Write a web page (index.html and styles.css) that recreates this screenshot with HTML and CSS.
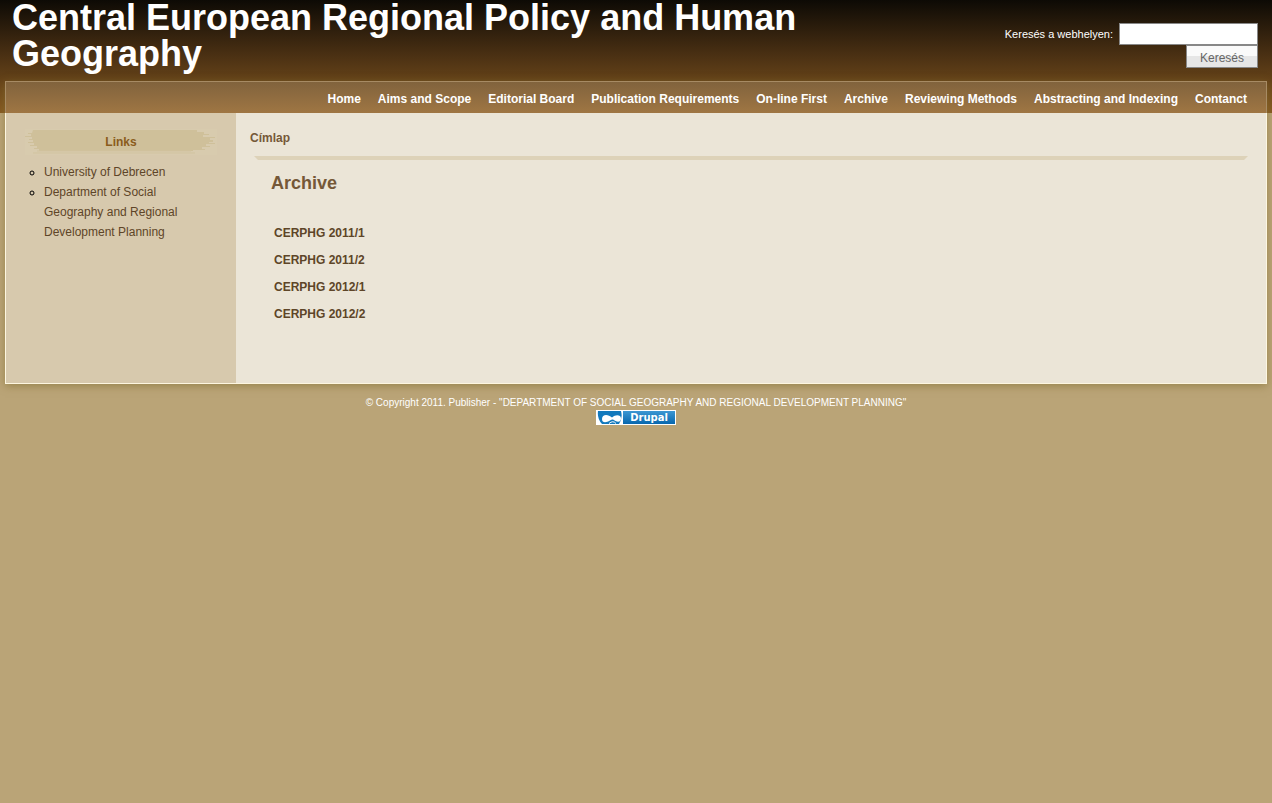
FILE: index.html
```html
<!DOCTYPE html>
<html lang="hu">
<head>
    <meta charset="UTF-8">
    <meta name="viewport" content="width=device-width, initial-scale=1.0">
    <title>Archive | Central European Regional Policy and Human Geography</title>
    <link rel="stylesheet" href="styles.css">
</head>
<body>
    <header class="header">
        <h1 class="site-name"><a href="#">Central European Regional Policy and Human Geography</a></h1>
        <form class="search" action="#">
            <div class="search-row">
                <label for="search-text">Keresés a webhelyen:</label>
                <input type="text" id="search-text" class="search-text">
            </div>
            <button type="submit" class="search-btn">Keresés</button>
        </form>
    </header>

    <div class="page">
        <nav class="menu">
            <a href="#">Home</a>
            <a href="#">Aims and Scope</a>
            <a href="#">Editorial Board</a>
            <a href="#">Publication Requirements</a>
            <a href="#">On-line First</a>
            <a href="#">Archive</a>
            <a href="#">Reviewing Methods</a>
            <a href="#">Abstracting and Indexing</a>
            <a href="#">Contanct</a>
        </nav>

        <div class="columns">
            <aside class="sidebar">
                <div class="block-title">
                    <svg class="brush" viewBox="0 0 192 26" preserveAspectRatio="none" aria-hidden="true">
                        <rect width="192" height="26" fill="#d8cbae"/>
                        <path fill="#cfc09a" d="M8 1H172V3H179V5H184V6H178V8H190V9H185V11H188V13H184V14H190V15H181V17H185V18H177V20H180V21H168V22H14V20H9V19H12V17H5V16H9V14H3V13H8V11H4V10H7V8H0V7H6V5H3V4H7Z"/>
                        <path stroke="#d1c39f" d="M12 22H166M8 24H170"/>
                    </svg>
                    <h2>Links</h2>
                </div>
                <ul class="links">
                    <li><a href="#">University of Debrecen</a></li>
                    <li><a href="#">Department of Social Geography and Regional Development Planning</a></li>
                </ul>
            </aside>

            <main class="content">
                <div class="breadcrumb"><a href="#">Címlap</a></div>
                <h2 class="title">Archive</h2>
                <ul class="issues">
                    <li><a href="#">CERPHG 2011/1</a></li>
                    <li><a href="#">CERPHG 2011/2</a></li>
                    <li><a href="#">CERPHG 2012/1</a></li>
                    <li><a href="#">CERPHG 2012/2</a></li>
                </ul>
            </main>
        </div>
    </div>

    <footer class="footer">
        <p>© Copyright 2011. Publisher - "DEPARTMENT OF SOCIAL GEOGRAPHY AND REGIONAL DEVELOPMENT PLANNING"</p>
        <a href="#" class="drupal">
            <svg width="25" height="13" viewBox="0 0 25 13" aria-hidden="true">
                <rect width="25" height="13" fill="#fff"/>
                <path fill="#1279bd" d="M1 0H24Q26 7 22 13H5Q0 8 1 0Z"/>
                <path fill="#fff" d="M5 8C5 3 11 3 15 6.500C19 3 24 4 24 7.500C24 12 19 11 16 8.500Q15 8 13 9.500C9 12 5 12 5 8Z"/>
                <path fill="none" stroke="#fff" d="M12 12.500Q16 9 19 12.500"/>
            </svg>
            <span>Drupal</span>
        </a>
    </footer>
</body>
</html>
```
FILE: styles.css
```css
* {
    box-sizing: border-box;
}
body {
    margin: 0;
    font-family: "Liberation Sans", Arial, sans-serif;
    font-size: 12px;
    line-height: 20px;
    color: #5e4528;
    background: #baa477 linear-gradient(#0d0a05, #4a3013 55px, #875a20 113px) no-repeat top / 100% 113px;
}
a {
    color: inherit;
    text-decoration: none;
}
h1, h2, p, ul {
    margin: 0;
    padding: 0;
}
.header {
    display: flex;
    justify-content: space-between;
    min-height: 81px;
    padding: 0 14px 0 12px;
}
.site-name {
    max-width: 840px;
    font-size: 36px;
    line-height: 36px;
    color: #fff;
}
.search {
    display: flex;
    flex-direction: column;
    align-items: flex-end;
    padding-top: 23px;
    font-size: 11px;
    color: #fff;
}
.search-row {
    display: flex;
    align-items: center;
    gap: 6px;
}
.search-text {
    width: 139px;
    height: 22px;
    border: 1px solid #888;
    background: #fff;
}
.search-btn {
    height: 23px;
    padding: 2px 13px 0;
    border: 1px solid #888;
    background: linear-gradient(#fafafa 50%, #e6e6e6 50%);
    font-family: inherit;
    font-size: 12px;
    color: #666;
}
.page {
    margin: 0 5px;
    border: 1px solid #fdf6e0;
    border-top: 0;
    box-shadow: 0 2px 8px rgba(130, 110, 50, 0.6);
    background: #ebe5d7;
}
.menu {
    display: flex;
    justify-content: flex-end;
    gap: 17px;
    height: 32px;
    margin: 0 -1px;
    padding: 7px 19px 0 0;
    border: 1px solid #a78b64;
    border-bottom: 0;
    background: linear-gradient(#81633d, #9f7643);
    font-weight: bold;
    color: #fff;
}
.columns {
    display: flex;
    min-height: 270px;
}
.sidebar {
    flex: none;
    width: 230px;
    padding: 16px 19px;
    background: #d7c9ad;
}
.block-title {
    display: grid;
}
.block-title > * {
    grid-area: 1 / 1;
}
.brush {
    width: 100%;
    height: 26px;
}
.block-title h2 {
    font-size: 12px;
    line-height: 26px;
    text-align: center;
    color: #8a5c1c;
}
.links {
    padding: 7px 0 0 19px;
    list-style: circle;
}
.links li::marker {
    color: #000;
}
.content {
    flex: 1;
    padding: 15px 16px 0 14px;
}
.breadcrumb {
    font-weight: bold;
    color: #755838;
}
.breadcrumb::after {
    content: "";
    display: block;
    height: 4px;
    margin: 8px 2px 0 4px;
    background: #ddd2b8;
    clip-path: polygon(0 0, 100% 0, calc(100% - 4px) 100%, 4px 100%);
}
.title {
    padding: 10px 0 0 21px;
    font-size: 18px;
    line-height: 26px;
    color: #755838;
}
.issues {
    padding: 27px 0 0 24px;
    list-style: none;
    font-weight: bold;
}
.issues li {
    margin-bottom: 7px;
}
.footer {
    padding-top: 11px;
    text-align: center;
    font-size: 10px;
    line-height: 15px;
    color: #fff;
}
.drupal {
    display: inline-flex;
    width: 80px;
    border: 1px solid #fff;
    background: linear-gradient(#3c97d3, #0767ae);
    font-family: "DejaVu Sans", sans-serif;
    font-size: 10px;
    line-height: 13px;
    font-weight: bold;
}
.drupal span {
    flex: 1;
    border-left: 1px solid #fff;
}
```
